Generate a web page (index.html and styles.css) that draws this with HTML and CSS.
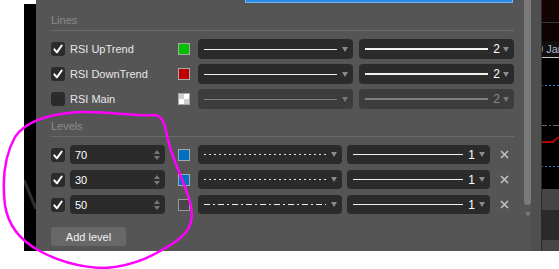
FILE: index.html
```html
<!doctype html>
<html>
<head>

  <title>RSI settings</title>

  <link rel="stylesheet" href="styles.css">

</head>
<body>

  <div class="screen">

    <div class="edge">
      <svg width="12" height="247" viewBox="0 0 12 247">
        <rect width="12" height="247" fill="#000"/>
        <path d="M0 176 L12 205" stroke="#2e2e2e" stroke-width="3"/>
      </svg>
    </div>

    <div class="panel">
      <div class="content">
        <div class="focus-field"></div>

        <div class="section-head">Lines</div>
        <div class="rows">
          <div class="row">
            <span class="check on"><svg width="14" height="14" viewBox="0 0 14 14"><path d="M3.3 7.4 L5.9 10.3 L10.7 3.5"/></svg></span>
            <span class="name">RSI UpTrend</span>
            <span class="swatch green"></span>
            <div class="select style"><span class="line"></span><span class="arrow"></span></div>
            <div class="select width"><span class="line thick"></span><span class="num">2</span><span class="arrow"></span></div>
          </div>
          <div class="row">
            <span class="check on"><svg width="14" height="14" viewBox="0 0 14 14"><path d="M3.3 7.4 L5.9 10.3 L10.7 3.5"/></svg></span>
            <span class="name">RSI DownTrend</span>
            <span class="swatch red"></span>
            <div class="select style"><span class="line"></span><span class="arrow"></span></div>
            <div class="select width"><span class="line thick"></span><span class="num">2</span><span class="arrow"></span></div>
          </div>
          <div class="row">
            <span class="check"></span>
            <span class="name">RSI Main</span>
            <span class="swatch clear"></span>
            <div class="select style off"><span class="line"></span><span class="arrow"></span></div>
            <div class="select width off"><span class="line thick"></span><span class="num">2</span><span class="arrow"></span></div>
          </div>
        </div>

        <div class="section-head">Levels</div>
        <div class="rows levels">
          <div class="row">
            <span class="check on"><svg width="14" height="14" viewBox="0 0 14 14"><path d="M3.3 7.4 L5.9 10.3 L10.7 3.5"/></svg></span>
            <div class="spin"><span class="value">70</span><span class="spin-btns"><i class="up"></i><i class="down"></i></span></div>
            <span class="swatch blue"></span>
            <div class="select style"><span class="line dotted"></span><span class="arrow"></span></div>
            <div class="select width"><span class="line"></span><span class="num">1</span><span class="arrow"></span></div>
            <span class="remove"><svg width="9" height="9" viewBox="0 0 9 9"><path d="M1 1 L8 8 M8 1 L1 8"/></svg></span>
          </div>
          <div class="row">
            <span class="check on"><svg width="14" height="14" viewBox="0 0 14 14"><path d="M3.3 7.4 L5.9 10.3 L10.7 3.5"/></svg></span>
            <div class="spin"><span class="value">30</span><span class="spin-btns"><i class="up"></i><i class="down"></i></span></div>
            <span class="swatch blue"></span>
            <div class="select style"><span class="line dotted"></span><span class="arrow"></span></div>
            <div class="select width"><span class="line"></span><span class="num">1</span><span class="arrow"></span></div>
            <span class="remove"><svg width="9" height="9" viewBox="0 0 9 9"><path d="M1 1 L8 8 M8 1 L1 8"/></svg></span>
          </div>
          <div class="row">
            <span class="check on"><svg width="14" height="14" viewBox="0 0 14 14"><path d="M3.3 7.4 L5.9 10.3 L10.7 3.5"/></svg></span>
            <div class="spin"><span class="value">50</span><span class="spin-btns"><i class="up"></i><i class="down"></i></span></div>
            <span class="swatch empty"></span>
            <div class="select style"><span class="line dashdot"></span><span class="arrow"></span></div>
            <div class="select width"><span class="line"></span><span class="num">1</span><span class="arrow"></span></div>
            <span class="remove"><svg width="9" height="9" viewBox="0 0 9 9"><path d="M1 1 L8 8 M8 1 L1 8"/></svg></span>
          </div>
        </div>

        <button class="add">Add level</button>
      </div>

      <div class="scroll">
        <div class="thumb"></div>
        <div class="scroll-down"></div>
      </div>
      <div class="rim"></div>
    </div>

    <div class="chart">
      <svg width="18" height="251" viewBox="0 0 18 251">
        <rect width="18" height="22" fill="#140303"/>
        <rect y="22" width="18" height="1" fill="#3a3a3a"/>
        <rect y="23" width="18" height="18" fill="#0c0202"/>
        <rect y="41" width="18" height="16" fill="#101010"/>
        <text x="-4" y="53" fill="#b4bccb" font-family="Liberation Sans, sans-serif" font-size="11">0 Jan</text>
        <rect y="57" width="18" height="1" fill="#c8c8c8"/>
        <rect y="58" width="18" height="131" fill="#000"/>
        <path d="M0 85.5 H18" stroke="#1f7fd0" stroke-dasharray="2 2"/>
        <path d="M0 125.5 H18" stroke="#6a6a6a" stroke-dasharray="6 2 2 2"/>
        <path d="M0 142 H12 L15 139 L18 137" stroke="#b00000" stroke-width="2" fill="none"/>
        <path d="M0 166.5 H18" stroke="#1f7fd0" stroke-dasharray="2 2"/>
        <rect y="189" width="18" height="21" fill="#454545"/>
        <rect y="210" width="18" height="30" fill="#2a2a2a"/>
        <rect y="240" width="18" height="11" fill="#464646"/>
        <rect width="1" height="251" fill="#2c2c2c"/>
      </svg>
    </div>

    <svg class="scribble" width="559" height="269" viewBox="0 0 559 269">
      <path d="M15 137 C25 122 45 114 80 112 C110 111 140 117 155 115 C163 116 165 125 167 135 C170 155 184 180 190 202 C195 220 190 232 175 242 C155 255 135 266 105 268 C80 268 55 260 38 250 C20 240 8 225 5 205 C2 180 5 155 15 137 Z"/>
    </svg>

  </div>

</body>
</html>
```

FILE: styles.css
```css
* {
  box-sizing: border-box;
}

body {
  margin: 0;
  background: #fff;
  font-family: "Liberation Sans", Arial, sans-serif;
  font-size: 11px;
  overflow: hidden;
}

.screen {
  position: relative;
  display: flex;
  align-items: flex-start;
  width: 559px;
  height: 269px;
  padding-left: 24px;
}

.edge {
  width: 12px;
  height: 247px;
  margin-top: 4px;
}

.edge svg,
.chart svg {
  display: block;
}

.panel {
  display: flex;
  width: 505px;
  height: 251px;
  background: #555;
}

.content {
  width: 488px;
  padding-left: 15px;
}

.focus-field {
  width: 268px;
  height: 3px;
  margin-left: 194px;
  background: #2d8ae8;
  border: 1px solid #74b4f0;
  border-top: 0;
}

.section-head {
  width: 463px;
  height: 18px;
  margin-top: 10px;
  padding-bottom: 3px;
  line-height: 14px;
  color: #8c8c8c;
  border-bottom: 1px solid #6b6b6b;
}

.rows {
  display: flex;
  flex-direction: column;
  gap: 5px;
  margin-top: 8px;
}

.row {
  display: flex;
  align-items: center;
  height: 20px;
}

.levels {
  gap: 6px;
}

.levels .row {
  height: 19px;
}

.check {
  display: flex;
  width: 14px;
  height: 14px;
  margin-right: 5px;
  background: #2b2b2b;
  border-radius: 3px;
}

.check path {
  fill: none;
  stroke: #fff;
  stroke-width: 2;
  stroke-linecap: round;
  stroke-linejoin: round;
}

.name {
  width: 108px;
  color: #e8e8e8;
}

.swatch {
  width: 12px;
  height: 12px;
  margin-right: 8px;
  border: 1px solid #a8a8a8;
}

.green { background: #00c000; }
.red { background: #c00000; }
.blue { background: #0070c0; }
.empty { background: #474747; border-color: #999; }
.clear {
  background: conic-gradient(#fff 0 25%, #cfcfcf 0 50%, #fff 0 75%, #cfcfcf 0);
}

.select {
  display: flex;
  align-items: center;
  height: 100%;
  padding: 0 5px 0 6px;
  background: #2b2b2b;
  border-radius: 4px;
}

.select.style {
  width: 155px;
  margin-right: 6px;
}

.select.width {
  width: 155px;
}

.levels .select.style {
  width: 144px;
  margin-right: 5px;
}

.levels .select.width {
  width: 143px;
}

.line {
  flex: 1;
  height: 1px;
  margin-right: 5px;
  background: #f0f0f0;
}

.line.thick {
  height: 2px;
}

.line.dotted {
  background: repeating-linear-gradient(90deg, #e4e4e4 0 2px, transparent 2px 5px);
}

.line.dashdot {
  background: repeating-linear-gradient(90deg, #eee 0 6px, transparent 6px 9px, #eee 9px 11px, transparent 11px 14px);
}

.num {
  margin-right: 3px;
  font-size: 12px;
  line-height: 12px;
  color: #fff;
}

.levels .num {
  margin-right: 4px;
}

.arrow {
  width: 0;
  height: 0;
  border-left: 3px solid transparent;
  border-right: 3px solid transparent;
  border-top: 5px solid #8a8a8a;
}

.select.off {
  background: #3c3c3c;
}

.select.off .line {
  background: #808080;
}

.select.off .num {
  color: #8a8a8a;
}

.select.off .arrow {
  border-top-color: #777;
}

.spin {
  display: flex;
  align-items: center;
  justify-content: space-between;
  width: 95px;
  height: 100%;
  margin-right: 13px;
  padding: 0 5px 0 5px;
  background: #2b2b2b;
  border-radius: 4px;
  color: #fff;
}

.spin-btns {
  display: flex;
  flex-direction: column;
  gap: 2px;
}

.spin-btns i {
  width: 0;
  height: 0;
  border-left: 3px solid transparent;
  border-right: 3px solid transparent;
}

.spin-btns .up {
  border-bottom: 4px solid #777;
}

.spin-btns .down {
  border-top: 4px solid #777;
}

.remove {
  display: flex;
  justify-content: center;
  width: 28px;
}

.remove path {
  stroke: #c4c4c4;
  stroke-width: 1.5;
}

.add {
  display: block;
  width: 75px;
  height: 19px;
  margin-top: 13px;
  padding: 0;
  border: 0;
  border-radius: 3px;
  background: #686868;
  color: #f2f2f2;
  font-family: inherit;
  font-size: 11px;
}

.scroll {
  display: flex;
  flex-direction: column;
  align-items: center;
  width: 7px;
}

.thumb {
  width: 7px;
  height: 205px;
  background: #7b7b7b;
  border-radius: 0 0 4px 4px;
}

.scroll-down {
  width: 0;
  height: 0;
  margin-top: 7px;
  border-left: 3.5px solid transparent;
  border-right: 3.5px solid transparent;
  border-top: 5px solid #777;
}

.rim {
  width: 10px;
  background: #4f4f4f;
}

.chart {
  width: 18px;
  height: 251px;
}

.scribble {
  position: absolute;
  top: 0;
  left: 0;
  pointer-events: none;
}

.scribble path {
  fill: none;
  stroke: #ff00ff;
  stroke-width: 2.5;
  stroke-linejoin: round;
}
```
